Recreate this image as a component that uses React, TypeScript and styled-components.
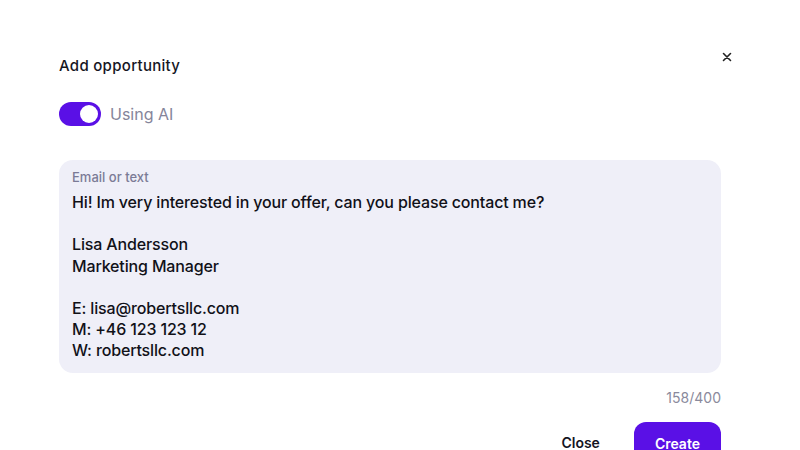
import React from "react";
import styled, { createGlobalStyle } from "styled-components";

const GlobalStyle = createGlobalStyle`
  html, body {
    margin: 0;
    padding: 0;
    background: #ffffff;
  }
  body {
    font-family: Inter, "Noto Sans", sans-serif;
    color: #14141f;
  }
`;

const Modal = styled.div`
  width: 800px;
  height: 450px;
  box-sizing: border-box;
  padding: 46px 79px 0 59px;
  overflow: hidden;
  display: flex;
  flex-direction: column;
`;

const Header = styled.div`
  display: flex;
  justify-content: space-between;
  align-items: flex-start;
  height: 38px;
`;

const Title = styled.h2`
  margin: 10px 0 0;
  font-size: 15px;
  font-weight: 500;
  letter-spacing: 0.3px;
  color: #16161f;
`;

const CloseX = styled.button`
  border: none;
  background: none;
  padding: 0;
  margin: 4px -13px 0 0;
  width: 14px;
  height: 14px;
  display: flex;
  align-items: center;
  justify-content: center;
  cursor: pointer;
`;

const ToggleRow = styled.label`
  display: flex;
  align-items: center;
  gap: 9px;
  margin-top: 27px;
`;

const Track = styled.span<{ $on: boolean }>`
  width: 42px;
  height: 24px;
  border-radius: 12px;
  background: ${(p) => (p.$on ? "#5a10e6" : "#d4d4de")};
  display: flex;
  align-items: center;
  justify-content: ${(p) => (p.$on ? "flex-end" : "flex-start")};
  padding: 0 3px;
  box-sizing: border-box;
`;

const Knob = styled.span`
  width: 18px;
  height: 18px;
  border-radius: 50%;
  background: #ffffff;
`;

const ToggleLabel = styled.span`
  font-size: 16px;
  color: #85859a;
`;

const Field = styled.div`
  margin-top: 34px;
  background: #efeff8;
  border-radius: 14px;
  padding: 9px 13px 11px;
  display: flex;
  flex-direction: column;
`;

const FieldLabel = styled.span`
  font-size: 13px;
  font-weight: 500;
  color: #7b7b96;
  line-height: 17px;
`;

const FieldText = styled.div`
  margin-top: 6px;
  font-size: 16px;
  font-weight: 500;
  letter-spacing: -0.15px;
  line-height: 21.2px;
  white-space: pre-wrap;
  color: #111118;
`;

const Counter = styled.div`
  margin-top: 16px;
  text-align: right;
  font-size: 14px;
  color: #8a8a9c;
`;

const Actions = styled.div`
  margin-top: 16px;
  display: flex;
  justify-content: flex-end;
  align-items: flex-start;
  gap: 20px;
`;

const Button = styled.button<{ $primary?: boolean }>`
  font-family: inherit;
  font-size: 14px;
  font-weight: 600;
  border: none;
  cursor: pointer;
  border-radius: 12px;
  height: 44px;
  display: flex;
  padding: ${(p) => (p.$primary ? "0 21px" : "12px 14px 0")};
  align-items: ${(p) => (p.$primary ? "center" : "flex-start")};
  background: ${(p) => (p.$primary ? "#5a10e6" : "transparent")};
  color: ${(p) => (p.$primary ? "#ffffff" : "#14141f")};
`;

const message = `Hi! Im very interested in your offer, can you please contact me?

Lisa Andersson
Marketing Manager

E: lisa@robertsllc.com
M: +46 123 123 12
W: robertsllc.com`;

export default function App() {
  return (
    <>
      <GlobalStyle />
      <Modal>
        <Header>
          <Title>Add opportunity</Title>
          <CloseX aria-label="Close">
            <svg width="10" height="10" viewBox="0 0 10 10">
              <path d="M1.5 1.5L8.5 8.5M8.5 1.5L1.5 8.5" stroke="#222" strokeWidth="1.6" strokeLinecap="round" />
            </svg>
          </CloseX>
        </Header>
        <ToggleRow>
          <Track $on>
            <Knob />
          </Track>
          <ToggleLabel>Using AI</ToggleLabel>
        </ToggleRow>
        <Field>
          <FieldLabel>Email or text</FieldLabel>
          <FieldText>{message}</FieldText>
        </Field>
        <Counter>{message.length}/400</Counter>
        <Actions>
          <Button>Close</Button>
          <Button $primary>Create</Button>
        </Actions>
      </Modal>
    </>
  );
}
